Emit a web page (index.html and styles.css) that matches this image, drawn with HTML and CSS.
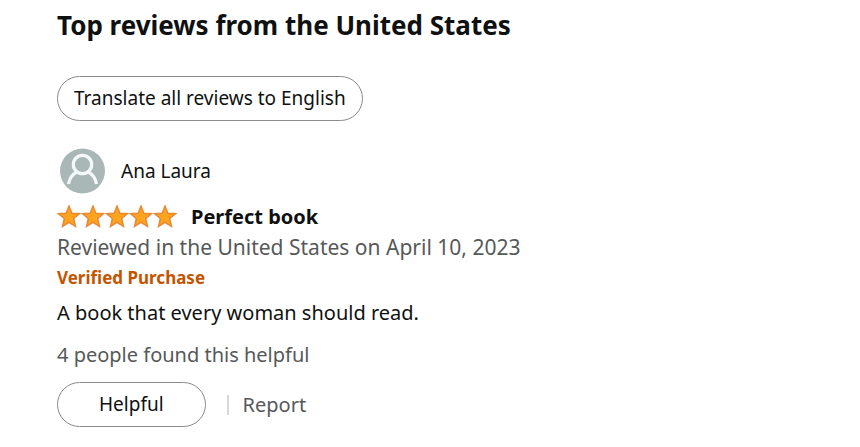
FILE: index.html
```
<!DOCTYPE html>
<html lang="en">
<head>
    <meta charset="UTF-8">
    <meta name="viewport" content="width=device-width, initial-scale=1.0">
    <title>Customer reviews</title>
    <link rel="stylesheet" href="styles.css">
</head>
<body>
    <main class="reviews">
        <h1 class="reviews-title">Top reviews from the United States</h1>
        <button type="button" class="pill-button">Translate all reviews to English</button>

        <article class="review">
            <div class="profile">
                <svg class="avatar" viewBox="0 0 46 46" aria-hidden="true">
                    <circle cx="22.500" cy="23" r="22.500" fill="#a9b7b7"/>
                    <g fill="none" stroke="#f3f9fa" stroke-width="3.200">
                        <circle cx="22.500" cy="16.500" r="9.200"/>
                        <path d="M8.500 36C9.500 30.500 12 26.500 17 24M28 24C33 26.500 35.500 30.500 36.500 36"/>
                    </g>
                </svg>
                <span class="profile-name">Ana Laura</span>
            </div>

            <div class="review-heading">
                <svg class="stars" viewBox="0 0 120 24" role="img" aria-label="5 out of 5 stars">
                    <defs>
                        <path id="star" d="M12 1L14.900 8.300L22.600 8.700L16.700 13.500L18.500 21.500L12 17.300L5.500 21.500L7.300 13.500L1.400 8.700L9.100 8.300Z" fill="#ffa41c" stroke="#e7873a" stroke-width="1.400"/>
                    </defs>
                    <use href="#star"/>
                    <use href="#star" x="24"/>
                    <use href="#star" x="48"/>
                    <use href="#star" x="72"/>
                    <use href="#star" x="96"/>
                </svg>
                <h2 class="review-title">Perfect book</h2>
            </div>

            <p class="review-date">Reviewed in the United States on April 10, 2023</p>
            <p class="verified">Verified Purchase</p>
            <p class="review-text">A book that every woman should read.</p>
            <p class="helpful-count">4 people found this helpful</p>

            <div class="review-actions">
                <button type="button" class="pill-button helpful-button">Helpful</button>
                <a href="#" class="report-link">Report</a>
            </div>
        </article>
    </main>
</body>
</html>
```
FILE: styles.css
```
body {
    margin: 0;
    background-color: #fff;
    color: #0f1111;
    font-family: "Noto Sans", "Open Sans", sans-serif;
    font-size: 20px;
    line-height: 30px;
}

h1,
h2,
p {
    margin: 0;
}

.reviews {
    padding: 8px 56px 16px 57px;
}

.reviews-title {
    margin-bottom: 34px;
    font-size: 26px;
    font-weight: 700;
    line-height: 34px;
}

.pill-button {
    padding: 7px 16px;
    border: 1px solid #888c8c;
    border-radius: 24px;
    background-color: #fff;
    color: #0f1111;
    font-family: inherit;
    font-size: 19px;
    line-height: 29px;
    cursor: pointer;
}

.pill-button:hover {
    background-color: #f7fafa;
}

.review {
    margin-top: 27px;
}

.profile {
    display: flex;
    align-items: center;
    gap: 15px;
    padding-left: 3px;
}

.avatar {
    width: 46px;
    height: 46px;
}

.profile-name {
    font-size: 19px;
}

.review-heading {
    display: flex;
    align-items: center;
    gap: 14px;
    margin-top: 8px;
}

.stars {
    width: 120px;
    height: 24px;
}

.review-title {
    font-size: 20px;
    font-weight: 700;
    line-height: 30px;
}

.review-date,
.helpful-count,
.report-link {
    color: #565959;
}

.review-date {
    font-size: 21px;
}

.verified {
    color: #c45500;
    font-size: 17px;
    font-weight: 700;
    line-height: 32px;
}

.review-text {
    margin-top: 4px;
}

.helpful-count {
    margin-top: 12px;
}

.review-actions {
    display: flex;
    align-items: center;
    margin-top: 12px;
}

.helpful-button {
    padding: 7px 41px;
}

.report-link {
    margin-left: 21px;
    padding-left: 14px;
    border-left: 2px solid #d5d9d9;
    line-height: 20px;
    text-decoration: none;
}

.report-link:hover {
    text-decoration: underline;
}
```
